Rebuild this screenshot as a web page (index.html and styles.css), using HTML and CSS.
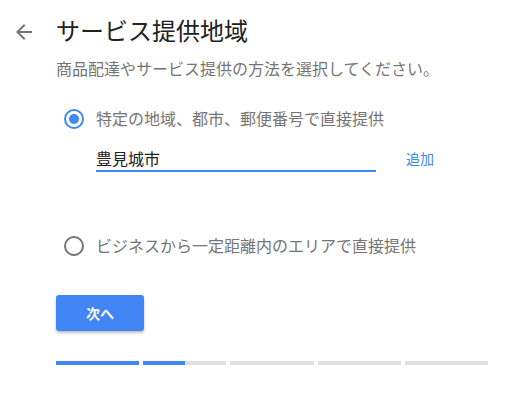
FILE: index.html
```html
<!DOCTYPE html>
<html>
<head>
    <title>サービス提供地域</title>
    <link rel="stylesheet" href="styles.css">
</head>
<body>
    <div class="header">
        <span class="back">
            <svg width="24" height="24" viewBox="0 0 24 24"><path d="M20 11H7.83l5.59-5.59L12 4l-8 8 8 8 1.41-1.41L7.83 13H20v-2z" fill="#757575"/></svg>
        </span>
        <h1>サービス提供地域</h1>
    </div>
    <div class="content">
        <p class="lead">商品配達やサービス提供の方法を選択してください。</p>

        <div class="option">
            <span class="radio checked"></span>
            <span class="option-label">特定の地域、都市、郵便番号で直接提供</span>
        </div>

        <div class="area-row">
            <div class="area-input">豊見城市</div>
            <span class="add">追加</span>
        </div>

        <div class="option option-second">
            <span class="radio"></span>
            <span class="option-label">ビジネスから一定距離内のエリアで直接提供</span>
        </div>

        <button class="next">次へ</button>

        <div class="progress">
            <div class="step done"></div>
            <div class="step"><div class="fill" style="width: 42px"></div></div>
            <div class="step"></div>
            <div class="step"></div>
            <div class="step"></div>
        </div>
    </div>
</body>
</html>
```

FILE: styles.css
```css
* {
	box-sizing: border-box;
}

body {
	margin: 0;
	padding: 0;
	background-color: #fff;
	font-family: "Noto Sans CJK JP", "Noto Sans", sans-serif;
	color: #212121;
}

.header {
	display: flex;
	align-items: center;
	margin-top: 14px;
	padding-left: 12px;
}

.back {
	display: flex;
	width: 24px;
	height: 24px;
	margin-top: 4px;
	margin-right: 20px;
}

h1 {
	margin: 0;
	font-size: 24px;
	line-height: 32px;
	font-weight: normal;
	color: #212121;
}

.content {
	padding-left: 56px;
}

.lead {
	margin: 10px 0 0;
	font-size: 16px;
	line-height: 24px;
	color: #757575;
}

.option {
	display: flex;
	align-items: center;
	margin-top: 26px;
	height: 24px;
}

.option-second {
	margin-top: 61px;
}

.radio {
	width: 20px;
	height: 20px;
	margin-left: 8px;
	margin-right: 12px;
	margin-top: 2px;
	border: 2px solid #757575;
	border-radius: 50%;
	display: flex;
	align-items: center;
	justify-content: center;
}

.radio.checked {
	border-color: #4285f4;
}

.radio.checked::after {
	content: "";
	width: 10px;
	height: 10px;
	border-radius: 50%;
	background-color: #4285f4;
}

.option-label {
	font-size: 16px;
	line-height: 24px;
	color: #757575;
}

.area-row {
	display: flex;
	align-items: flex-start;
	margin-top: 16px;
	padding-left: 40px;
}

.area-input {
	width: 280px;
	font-size: 16px;
	line-height: 24px;
	color: #212121;
	border-bottom: 2px solid #4285f4;
}

.add {
	margin-left: 30px;
	font-size: 14px;
	line-height: 24px;
	color: #4285f4;
}

.next {
	display: block;
	margin-top: 38px;
	width: 88px;
	height: 36px;
	border: none;
	border-radius: 3px;
	background-color: #4285f4;
	color: #fff;
	font-family: inherit;
	font-size: 14px;
	font-weight: bold;
	box-shadow: 0 2px 3px rgba(0, 0, 0, 0.25);
}

.progress {
	display: flex;
	gap: 4px;
	width: 432px;
	margin-top: 30px;
}

.step {
	flex: 1;
	height: 4px;
	background-color: #e0e0e0;
}

.step.done {
	background-color: #4285f4;
}

.fill {
	height: 4px;
	background-color: #4285f4;
}
```
